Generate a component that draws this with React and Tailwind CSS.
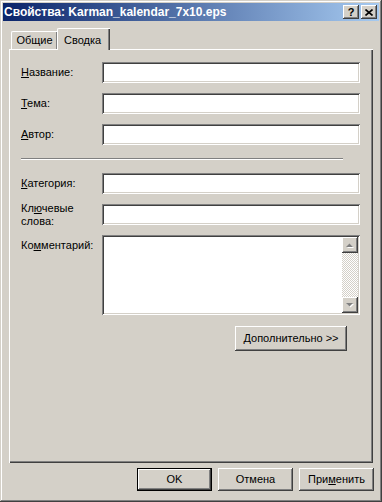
import React from "react";

const raised =
  "shadow-[inset_-1px_-1px_#404040,inset_1px_1px_#ffffff,inset_-2px_-2px_#808080,inset_2px_2px_#d4d0c8]";
const sunken =
  "shadow-[inset_1px_1px_#808080,inset_-1px_-1px_#ffffff,inset_2px_2px_#404040,inset_-2px_-2px_#d4d0c8]";

function Field({ label }) {
  return (
    <div className="flex items-center h-[21px]">
      <div className="w-[81px] leading-[13px]">{label}</div>
      <div className={`w-[258px] h-[21px] bg-white ${sunken}`} />
    </div>
  );
}

function Arrow({ up }) {
  return (
    <div className={`w-[16px] h-[16px] bg-[#d4d0c8] flex items-center justify-center ${raised}`}>
      <svg width="8" height="5" viewBox="0 0 8 5" className="overflow-visible">
        {up ? (
          <>
            <path d="M1 5 L8 5 L4.5 1.5 Z" fill="#ffffff" />
            <path d="M0 4 L7 4 L3.5 0.5 Z" fill="#808080" />
          </>
        ) : (
          <>
            <path d="M1 1 L8 1 L4.5 4.5 Z" fill="#ffffff" />
            <path d="M0 0 L7 0 L3.5 3.5 Z" fill="#808080" />
          </>
        )}
      </svg>
    </div>
  );
}

function Button({ children, def, w = "w-[75px]", h = "h-[23px]" }) {
  return (
    <div
      className={`${w} ${h} bg-[#d4d0c8] flex items-center justify-center ${
        def
          ? "border border-black shadow-[inset_-1px_-1px_#404040,inset_1px_1px_#ffffff,inset_-2px_-2px_#808080,inset_2px_2px_#d4d0c8]"
          : raised
      }`}
    >
      {children}
    </div>
  );
}

export default function App() {
  return (
    <div className="w-[382px] h-[502px] bg-[#d4d0c8] font-['Tahoma','Liberation_Sans',sans-serif] text-[11px] text-black shadow-[inset_-1px_-1px_#404040,inset_1px_1px_#d4d0c8,inset_-2px_-2px_#808080,inset_2px_2px_#ffffff] p-[3px] flex flex-col overflow-hidden">
      {/* Title bar */}
      <div className="h-[18px] bg-[linear-gradient(to_right,#0a246a,#a6caf0)] flex items-center pl-[1px] pr-[2px]">
        <span className="text-white font-bold text-[12px] leading-none flex-1">
          Свойства: Karman_kalendar_7x10.eps
        </span>
        <div className={`w-[16px] h-[14px] bg-[#d4d0c8] flex items-center justify-center font-bold text-[11px] leading-none ${raised}`}>
          ?
        </div>
        <div className={`ml-[2px] w-[16px] h-[14px] bg-[#d4d0c8] flex items-center justify-center ${raised}`}>
          <svg width="8" height="7" viewBox="0 0 8 7">
            <path d="M0.5 0.5 L7.5 6.5 M7.5 0.5 L0.5 6.5" stroke="#000" strokeWidth="1.6" />
          </svg>
        </div>
      </div>

      <div className="pl-[6px] flex flex-col">
        {/* Tabs */}
        <div className="mt-[7px] h-[21px] flex items-end relative z-10">
          <div className="ml-[2px] w-[46px] h-[18px] border-l border-t border-white rounded-tl-[2px] shadow-[inset_-1px_0_#808080] flex items-center justify-center pb-[1px]">
            Общие
          </div>
          <div className="w-[53px] h-[22px] -mb-px bg-[#d4d0c8] border-l border-t border-white rounded-tl-[2px] shadow-[inset_-1px_0_#404040,inset_-2px_0_#808080] flex items-start pt-[3px] pl-[6px]">
            Сводка
          </div>
        </div>

        {/* Panel */}
        <div className="w-[364px] h-[414px] border-t border-l border-white shadow-[inset_-1px_-1px_#404040,inset_-2px_-2px_#808080] pl-[11px] pt-[12px] flex flex-col">
          <div className="flex flex-col gap-[10px]">
            <Field label={<><u>Н</u>азвание:</>} />
            <Field label={<><u>Т</u>ема:</>} />
            <Field label={<><u>А</u>втор:</>} />
          </div>

          <div className="mt-[13px] w-[322px] h-[2px] border-t border-[#808080] border-b-white border-b" />

          <div className="mt-[13px] flex flex-col gap-[10px]">
            <Field label={<><u>К</u>атегория:</>} />
            <Field label={<>Кл<u>ю</u>чевые<br />слова:</>} />
            <div className="flex items-start">
              <div className="w-[81px] leading-[13px] pt-[4px]">
                Ко<u>м</u>ментарий:
              </div>
              <div className={`w-[258px] h-[80px] bg-white ${sunken} p-[2px] flex justify-end`}>
                <div className="w-[16px] h-full flex flex-col">
                  <Arrow up />
                  <div className="flex-1 bg-[repeating-conic-gradient(#d4d0c8_0%_25%,#ffffff_0%_50%)] bg-size-[2px_2px]" />
                  <Arrow />
                </div>
              </div>
            </div>
          </div>

          <div className="mt-[11px] flex justify-end pr-[26px]">
            <Button w="w-[112px]" h="h-[25px]">
              <span><u>Д</u>ополнительно &gt;&gt;</span>
            </Button>
          </div>
        </div>

        {/* Bottom buttons */}
        <div className="mt-[5px] w-[365px] flex justify-end gap-[6px]">
          <Button def>OK</Button>
          <Button>Отмена</Button>
          <Button>
            <span>При<u>м</u>енить</span>
          </Button>
        </div>
      </div>
    </div>
  );
}
